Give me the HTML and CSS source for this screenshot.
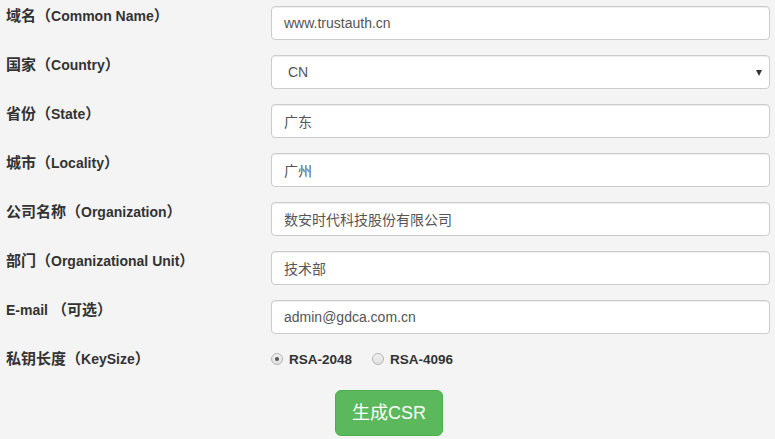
FILE: index.html
```html
<!DOCTYPE html>
<html lang="zh-CN">
<head>
<meta charset="utf-8">
<title>生成CSR</title>
<link rel="stylesheet" href="styles.css">
</head>
<body>
<form class="csr-form">
  <div class="row">
    <label class="row-label"><span class="zh">域名（</span>Common Name<span class="zh">）</span></label>
    <input class="field" type="text" value="www.trustauth.cn">
  </div>
  <div class="row">
    <label class="row-label"><span class="zh">国家（</span>Country<span class="zh">）</span></label>
    <div class="select-wrap">
      <select class="field select"><option>CN</option></select>
    </div>
  </div>
  <div class="row">
    <label class="row-label"><span class="zh">省份（</span>State<span class="zh">）</span></label>
    <input class="field" type="text" value="广东">
  </div>
  <div class="row">
    <label class="row-label"><span class="zh">城市（</span>Locality<span class="zh">）</span></label>
    <input class="field" type="text" value="广州">
  </div>
  <div class="row">
    <label class="row-label"><span class="zh">公司名称（</span>Organization<span class="zh">）</span></label>
    <input class="field" type="text" value="数安时代科技股份有限公司">
  </div>
  <div class="row">
    <label class="row-label"><span class="zh">部门（</span>Organizational Unit<span class="zh">）</span></label>
    <input class="field" type="text" value="技术部">
  </div>
  <div class="row">
    <label class="row-label">E-mail <span class="zh">（可选）</span></label>
    <input class="field" type="text" value="admin@gdca.com.cn">
  </div>
  <div class="row row-radio">
    <label class="row-label"><span class="zh">私钥长度（</span>KeySize<span class="zh">）</span></label>
    <div class="radios">
      <label class="radio"><input type="radio" name="ks" checked><span>RSA-2048</span></label>
      <label class="radio"><input type="radio" name="ks"><span>RSA-4096</span></label>
    </div>
  </div>
  <div class="actions">
    <button type="button" class="btn-submit">生成CSR</button>
  </div>
</form>
</body>
</html>
```
FILE: styles.css
```css
html, body {
  margin: 0;
  padding: 0;
  background: #f4f4f4;
}
body {
  font-family: "Liberation Sans", "Noto Sans CJK SC", sans-serif;
  color: #333;
}
.csr-form {
  padding: 6px 5px 0 6px;
  display: flex;
  flex-direction: column;
  gap: 15px;
}
.row {
  display: grid;
  grid-template-columns: 265px 1fr;
  align-items: start;
}
.row-label {
  font-weight: bold;
  font-size: 14px;
  line-height: 20px;
  height: 20px;
  color: #333;
  white-space: nowrap;
}
.zh {
  font-family: "Noto Sans CJK SC", sans-serif;
  font-size: 15px;
  line-height: 1;
}
.field {
  box-sizing: border-box;
  width: 100%;
  height: 34px;
  padding: 6px 12px;
  font-family: "Liberation Sans", "Noto Sans CJK SC", sans-serif;
  font-size: 14px;
  line-height: 20px;
  color: #555;
  background: #fff;
  border: 1px solid #ccc;
  border-radius: 4px;
  box-shadow: inset 0 1px 1px rgba(0,0,0,.075);
  outline: none;
  margin: 0;
}
.select-wrap {
  position: relative;
}
.select {
  -webkit-appearance: none;
  appearance: none;
  padding-left: 16px;
}
.select-wrap::after {
  content: "";
  position: absolute;
  right: 8px;
  top: 15px;
  border-left: 3.5px solid transparent;
  border-right: 3.5px solid transparent;
  border-top: 6px solid #333;
  pointer-events: none;
}
.row-radio {
  align-items: center;
}
.radios {
  display: flex;
  align-items: center;
  gap: 20px;
  height: 20px;
}
.radio {
  display: flex;
  align-items: center;
  gap: 6px;
  font-weight: bold;
  font-size: 13.5px;
  color: #333;
}
.radio input {
  -webkit-appearance: none;
  appearance: none;
  margin: 0;
  width: 12px;
  height: 12px;
  border-radius: 50%;
  border: 1px solid #b5b5b5;
  background: linear-gradient(#f0f0f0, #e0e0e0);
  box-sizing: border-box;
  display: grid;
  place-items: center;
}
.radio input:checked::before {
  content: "";
  width: 4px;
  height: 4px;
  border-radius: 50%;
  background: #555;
}
.actions {
  display: flex;
  justify-content: center;
  padding-top: 6px;
  padding-left: 2px;
}
.btn-submit {
  font-family: "Liberation Sans", "Noto Sans CJK SC", sans-serif;
  font-size: 18px;
  line-height: 24px;
  padding: 10px 16px;
  color: #fff;
  background: #5cb85c;
  border: 1px solid #4cae4c;
  border-radius: 6px;
  cursor: pointer;
}
```
